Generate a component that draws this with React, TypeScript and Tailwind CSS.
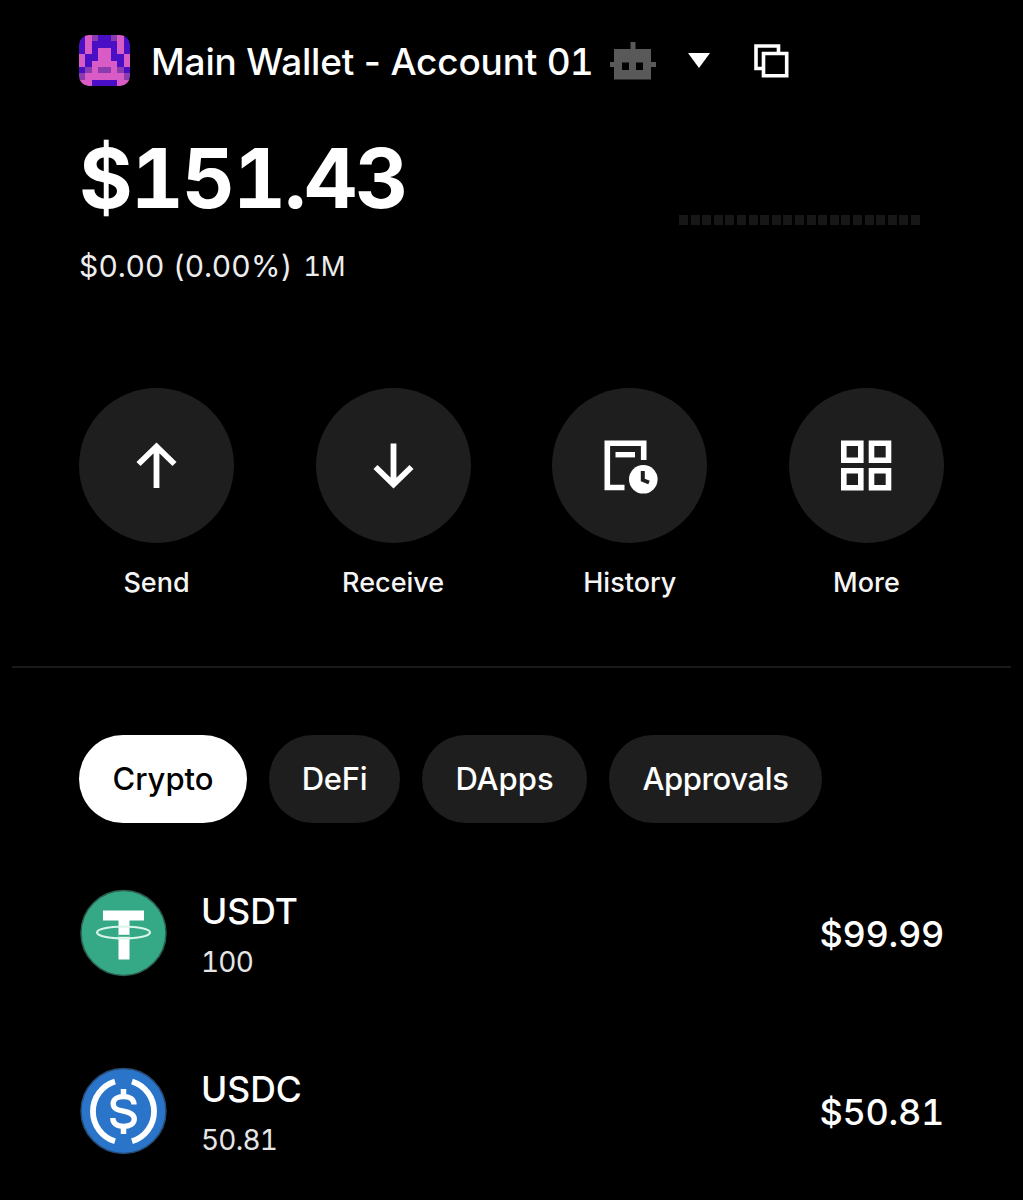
import React from 'react';

interface Token {
  symbol: string;
  amount: string;
  value: string;
  icon: React.ReactNode;
}

// b = blue, p = pink, m = the tone between them
const AVATAR_ROWS = [
  'bpmbbmpb',
  'bpbbbbpb',
  'bpbppbpb',
  'pbbppbbp',
  'pbppppbp',
  'bmpmmpmb',
  'mppppppm',
  'ppbbbbpp',
];

const AVATAR_COLORS: Record<string, string> = { b: '#4a0fc4', p: '#d95cc6', m: '#8a3cae' };

const Avatar = () => (
  <svg viewBox="0 0 8 8" shapeRendering="crispEdges" className="w-[51px] h-[51px] rounded-[10px]">
    {AVATAR_ROWS.map((row, y) =>
      row.split('').map((c, x) => (
        <rect key={`${x}-${y}`} x={x} y={y} width="1" height="1" fill={AVATAR_COLORS[c]} />
      ))
    )}
  </svg>
);

const RobotIcon = () => (
  <svg viewBox="0 0 46 38" className="w-[46px] h-[38px]" fill="#595959">
    <path d="M20.5 0h5v7h-5z" />
    <path fillRule="evenodd" d="M4 7h37v13h5v5h-5v12.5H4V25H0v-5h4zM12 20.500v7.500h7v-7.500zM26 20.500v7.500h7v-7.500z" />
  </svg>
);

const CopyIcon = () => (
  <svg viewBox="0 0 35 34" className="w-[35px] h-[34px]" fill="none" stroke="white" strokeWidth="3.6">
    <path d="M8 24.500H2V2h22.500v6" />
    <path d="M9.500 9.500h23.200v22.200H9.500z" />
  </svg>
);

const SendIcon = () => (
  <svg viewBox="0 0 155 155" className="w-full h-full" fill="none" stroke="white" strokeWidth="5.800">
    <path d="M77.500 100V58M59.500 76L77.500 58.500L95.500 76" />
  </svg>
);

const ReceiveIcon = () => (
  <svg viewBox="0 0 155 155" className="w-full h-full" fill="none" stroke="white" strokeWidth="5.800">
    <path d="M77.500 55.500V97M59.500 79L77.500 96.500L95.500 79" />
  </svg>
);

const HistoryIcon = () => (
  <svg viewBox="0 0 155 155" className="w-full h-full" fill="none">
    <path d="M72.500 99.500H55.300V55.300H91.700V72" stroke="white" strokeWidth="5.600" />
    <path d="M63.500 66.700H83" stroke="white" strokeWidth="5.400" />
    <circle cx="91.300" cy="91.300" r="14.300" fill="white" />
    <path d="M90.800 83V92L97 94.500" stroke="#1e1e1e" strokeWidth="4" />
  </svg>
);

const MoreIcon = () => (
  <svg viewBox="0 0 155 155" className="w-full h-full" fill="none" stroke="white" strokeWidth="5.600">
    <path d="M54.800 55.300h17v17h-17zM82.500 55.300h17v17h-17zM54.800 82.700h17v17h-17zM82.500 82.700h17v17h-17z" />
  </svg>
);

const TetherIcon = () => (
  <svg viewBox="0 0 88 88" className="w-[88px] h-[88px]">
    <circle cx="44.500" cy="44" r="42.500" fill="#35a985" stroke="#2c5f50" strokeWidth="1.500" />
    <path d="M24 21.500h41v10H50.500v39h-11v-39H24z" fill="white" />
    <ellipse cx="44.500" cy="43.500" rx="26.500" ry="6" fill="none" stroke="#d9f5ea" strokeWidth="2.200" />
    <path d="M39.500 45.800h11v2h-11z" fill="#35a985" />
  </svg>
);

const UsdcIcon = () => (
  <svg viewBox="0 0 88 88" className="w-[88px] h-[88px]" fill="none">
    <circle cx="44.500" cy="44" r="42.500" fill="#2a75ca" stroke="#274a72" strokeWidth="1.500" />
    <path d="M36 14.500A31.300 31.300 0 0 0 36 74.300M53 14.500A31.300 31.300 0 0 1 53 74.300" stroke="white" strokeWidth="5.800" />
    <path d="M44.500 22V29M44.500 59.500V67" stroke="white" strokeWidth="5.500" />
    <path
      d="M55 37.500C55 32 50.500 29.700 44.500 29.700C38.500 29.700 34.200 32 34.200 36.800C34.200 41.800 38.700 43 44.500 44.200C50.500 45.500 55.300 47 55.300 52C55.300 56.800 50.800 59.300 44.500 59.300C37.800 59.300 33.800 56.500 33.800 51"
      stroke="white"
      strokeWidth="5.300"
    />
  </svg>
);

const ACTIONS = [
  { label: 'Send', icon: <SendIcon /> },
  { label: 'Receive', icon: <ReceiveIcon /> },
  { label: 'History', icon: <HistoryIcon /> },
  { label: 'More', icon: <MoreIcon /> },
];

const TABS = [
  { label: 'Crypto', style: 'w-[168px] bg-white text-black' },
  { label: 'DeFi', style: 'w-[131px] bg-[#1e1e1e] text-white tracking-[-0.3px]' },
  { label: 'DApps', style: 'w-[165px] bg-[#1e1e1e] text-white' },
  { label: 'Approvals', style: 'w-[213px] bg-[#1e1e1e] text-white tracking-[-0.4px]' },
];

const TOKENS: Token[] = [
  { symbol: 'USDT', amount: '100', value: '$99.99', icon: <TetherIcon /> },
  { symbol: 'USDC', amount: '50.81', value: '$50.81', icon: <UsdcIcon /> },
];

export default function App() {
  return (
    <div className="min-h-[1200px] bg-black text-white font-['Inter',sans-serif] pt-[35px] overflow-hidden">
      <header className="flex items-center pl-[79px] h-[51px]">
        <Avatar />
        <h1 className="ml-[21px] pt-[2px] w-[459px] text-[37px] leading-[51px] font-medium tracking-[-0.2px] whitespace-nowrap">
          Main Wallet - Account <span className="tabular-nums tracking-[-1px]">01</span>
        </h1>
        <RobotIcon />
        <svg viewBox="0 0 22 15" className="ml-[32px] w-[22px] h-[15px]" fill="white">
          <path d="M0 0h22L11 15z" />
        </svg>
        <div className="ml-[44px]"><CopyIcon /></div>
      </header>

      <section className="flex justify-between pl-[79px] pr-[103px] mt-[52px] h-[250px]">
        <div>
          <p className="text-[82px] leading-[81px] font-bold tabular-nums tracking-[-1.9px]">$151.43</p>
          <p className="flex mt-[29px] leading-[36px] text-[30px] text-[#ededed]">
            <span className="tracking-[0.5px]">$0.00 (0.00%)</span>
            <span className="ml-[11px] text-[27.5px] tabular-nums tracking-[-0.3px]">1M</span>
          </p>
        </div>
        <div className="flex justify-between w-[241px] mt-[77px]">
          {Array.from({ length: 21 }, (_, i) => (
            <span key={i} className="w-[9px] h-[10px] bg-[#171717]" />
          ))}
        </div>
      </section>

      <nav className="flex justify-between pl-[79px] pr-[79px]">
        {ACTIONS.map(a => (
          <button key={a.label} className="flex flex-col items-center w-[155px]">
            <span className="w-[155px] h-[155px] rounded-full bg-[#1e1e1e]">{a.icon}</span>
            <span className="mt-[24px] text-[27px] leading-[32px] font-medium text-[#f5f5f5]">{a.label}</span>
          </button>
        ))}
      </nav>

      <hr className="mt-[67px] mx-[12px] border-t-2 border-[#1a1a1a]" />

      <div className="flex gap-[22px] pl-[79px] mt-[67px]">
        {TABS.map(t => (
          <button key={t.label} className={`h-[88px] rounded-full text-[31px] font-medium ${t.style}`}>{t.label}</button>
        ))}
      </div>

      <ul className="mt-[66px] pl-[79px] pr-[79px] space-y-[89.5px]">
        {TOKENS.map(t => (
          <li key={t.symbol} className="flex items-center h-[88px]">
            {t.icon}
            <div className="flex-1 ml-[34px] pt-2">
              <p className="text-[35.5px] leading-[50px] font-medium">{t.symbol}</p>
              <p className="text-[28px] leading-[50px] text-[#e5e5e5] tabular-nums tracking-[-0.8px]">{t.amount}</p>
            </div>
            <p className="pt-[2px] text-[36px] font-medium tabular-nums tracking-[-0.3px]">{t.value}</p>
          </li>
        ))}
      </ul>
    </div>
  );
}
